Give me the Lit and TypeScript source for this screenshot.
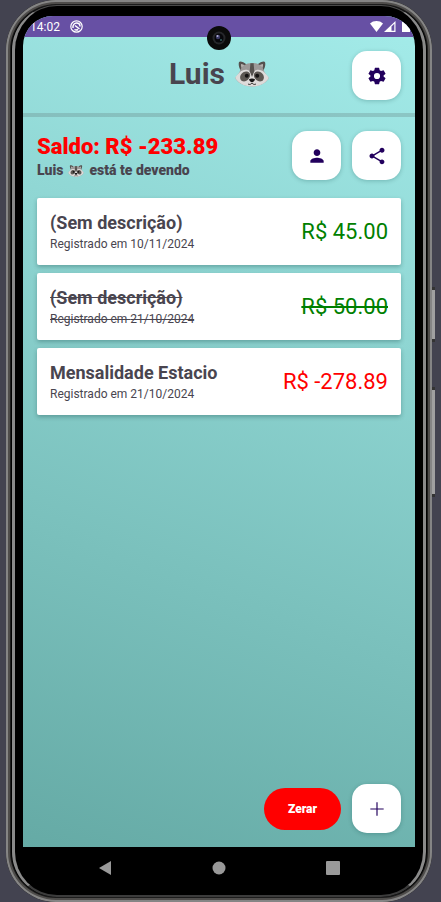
import { LitElement, html, css, svg } from "lit";
import { customElement, property } from "lit/decorators.js";
import { classMap } from "lit/directives/class-map.js";

interface Entry {
  title: string;
  date: string;
  amount: number;
  settled: boolean;
}

const ENTRIES: Entry[] = [
  { title: "(Sem descrição)", date: "10/11/2024", amount: 45, settled: false },
  { title: "(Sem descrição)", date: "21/10/2024", amount: 50, settled: true },
  { title: "Mensalidade Estacio", date: "21/10/2024", amount: -278.89, settled: false },
];

const ICONS = {
  settings: svg`<path fill-rule="evenodd" d="M9.500 2h5l.7 3.200 1.600.9 3.100-1 2.400 4.200L19.900 11.400v1.200l2.400 2.100-2.400 4.200-3.100-1-1.600.9-.7 3.200h-5l-.7-3.200-1.600-.9-3.100 1-2.400-4.200 2.400-2.100v-1.200L1.700 9.300l2.400-4.200 3.100 1 1.600-.9zM12 8.300a3.700 3.700 0 1 0 0 7.400 3.700 3.700 0 0 0 0-7.400z"/>`,
  person: svg`<path d="M12 12c2.210 0 4-1.790 4-4s-1.790-4-4-4-4 1.790-4 4 1.790 4 4 4zm0 2c-2.670 0-8 1.340-8 4v2h16v-2c0-2.660-5.330-4-8-4z"/>`,
  share: svg`<path d="M18 16.080c-.76 0-1.440.3-1.960.77L8.910 12.700c.05-.23.09-.46.09-.7s-.04-.47-.09-.7l7.050-4.110c.54.5 1.250.81 2.040.81 1.660 0 3-1.340 3-3s-1.340-3-3-3-3 1.340-3 3c0 .24.04.47.09.7L8.040 9.810C7.500 9.310 6.790 9 6 9c-1.660 0-3 1.340-3 3s1.340 3 3 3c.79 0 1.500-.31 2.040-.81l7.120 4.160c-.05.21-.08.43-.08.65 0 1.610 1.310 2.920 2.920 2.920s2.920-1.310 2.920-2.920-1.310-2.920-2.920-2.920z"/>`,
  add: svg`<path d="M11.300 4h1.400v7.300H20v1.400h-7.300V20h-1.400v-7.300H4v-1.400h7.300z"/>`,
};

const money = (value: number) => `R$ ${value.toFixed(2)}`;

@customElement("raccoon-face")
export class RaccoonFace extends LitElement {
  static styles = css`
    :host {
      display: inline-block;
      width: 34px;
      height: 26px;
    }
    svg {
      display: block;
      width: 100%;
      height: 100%;
    }
  `;
  render() {
    return html`<svg viewBox="0 0 34 26" role="img" aria-label="🦝">
      <path d="M4 1.200C4.600-.2 8.800 1 11.500 3.500L6 10C4 7 3.200 3 4 1.200z" fill="#55514f" />
      <path d="M30 1.200C29.400-.2 25.200 1 22.500 3.500L28 10C30 7 30.800 3 30 1.200z" fill="#55514f" />
      <path d="M6 3c1.600 0 3 .8 4 2L7 8C6.200 6.500 5.800 4.500 6 3z" fill="#b5b1ae" />
      <path d="M28 3c-1.600 0-3 .8-4 2l3 3c.8-1.500 1.200-3.500 1-5z" fill="#b5b1ae" />
      <path d="M17 2C11 2 6.500 5 5 10c-1 3-3.500 4.500-4.800 7C2 21 8 25.500 17 25.500S32 21 33.800 17C32.500 14.500 30 13 29 10 27.500 5 23 2 17 2z" fill="#9c9998" />
      <path d="M4.500 11.500C2.800 13.500.9 15 .3 17 2.300 21.200 8.500 25.500 17 25.500S31.700 21.200 33.700 17c-.6-2-2.500-3.500-4.200-5.500-3-3.200-8-3.500-10.500-1.200L17 14l-2-3.700c-2.500-2.300-7.500-2-10.500 1.200z" fill="#dedbda" />
      <path d="M15.400 2.200h3.200l.7 8L17 16l-2.300-5.800z" fill="#56524f" />
      <path d="M14.500 12c-2.500-2.500-6.500-1.500-8.500 1.500-1.500 2.300-1 5.500 1 6.500 3.500 1.500 6.800-1.300 7.800-4 .5-1.500.5-3-.3-4z" fill="#5d5853" />
      <path d="M19.500 12c2.500-2.500 6.500-1.500 8.500 1.500 1.500 2.300 1 5.500-1 6.500-3.500 1.500-6.800-1.300-7.800-4-.5-1.500-.5-3 .3-4z" fill="#5d5853" />
      <circle cx="11.800" cy="14.800" r="2" fill="#151313" />
      <circle cx="22.200" cy="14.800" r="2" fill="#151313" />
      <path d="M14 18.200c1.500-1 4.500-1 6 0 0 1.500-1.800 3-3 3s-3-1.500-3-3z" fill="#181616" />
      <path d="M13 23c1.500.8 3 .5 4-1 1 1.500 2.500 1.800 4 1" fill="none" stroke="#3c3836" stroke-width="1" />
    </svg>`;
  }
}

@customElement("icon-button")
export class IconButton extends LitElement {
  @property() icon: keyof typeof ICONS = "add";
  @property() label = "";
  static styles = css`
    :host {
      display: block;
    }
    button {
      display: grid;
      place-items: center;
      width: 49px;
      height: 49px;
      padding: 0;
      border: 0;
      border-radius: 15px;
      background: #fff;
      box-shadow: 0 1px 4px rgba(0, 60, 60, 0.25);
    }
    svg {
      width: 20px;
      height: 20px;
      fill: #22005d;
    }
  `;
  render() {
    return html`<button aria-label=${this.label}>
      <svg viewBox="0 0 24 24" aria-hidden="true">${ICONS[this.icon]}</svg>
    </button>`;
  }
}

@customElement("app-root")
export class AppRoot extends LitElement {
  static styles = css`
    * {
      box-sizing: border-box;
    }
    :host {
      display: block;
      background: #434350;
      color: #49454f;
      font-family: Roboto, "Liberation Sans", sans-serif;
    }
    h1,
    h2,
    h3,
    p,
    ul {
      margin: 0;
      padding: 0;
    }
    .desk {
      display: flex;
      min-height: 100vh;
      padding: 0 9px 0 6px;
    }
    .phone {
      position: relative;
      flex: 1;
      display: flex;
      flex-direction: column;
      padding: 16px 17px 0;
      border-radius: 50px;
      background: #000;
      box-shadow: inset 0 0 0 2px #858585, inset 0 0 0 4px #4f4d4b,
        inset 0 0 0 5px #1c1c1c;
    }
    .phone::before {
      content: "";
      position: absolute;
      inset: 5px 6px;
      border: solid #8a8a8a;
      border-color: #4a4a4a #8a8a8a #3c3c3c;
      border-width: 1px 3px 2px;
      border-radius: 45px;
      pointer-events: none;
    }
    .key {
      position: absolute;
      left: 100%;
      width: 3px;
      background: #a0a0a0;
      border: solid #333;
      border-width: 3px 0;
    }
    .power {
      top: 287px;
      height: 55px;
    }
    .volume {
      top: 387px;
      height: 110px;
    }
    .camera {
      position: absolute;
      top: 26px;
      left: 50%;
      width: 24px;
      height: 24px;
      margin-left: -12px;
    }
    .screen {
      flex: 1;
      display: flex;
      flex-direction: column;
      overflow: hidden;
      border-radius: 30px 30px 0 0;
      background: linear-gradient(200deg, #a4ecea, #65aaa5);
    }
    .status {
      display: flex;
      align-items: center;
      gap: 10px;
      height: 21px;
      padding: 0 0 0 7px;
      background: #6750a4;
      color: #fff;
      font-size: 12px;
    }
    .status svg {
      display: block;
    }
    .signals {
      display: flex;
      gap: 1px;
      margin-left: auto;
      padding-right: 5px;
    }
    header {
      display: grid;
      grid-template-columns: 49px 1fr 49px;
      align-items: center;
      padding: 14px 14px 13px;
      border-bottom: 4px solid rgba(100, 125, 125, 0.3);
    }
    h1 {
      grid-column: 2;
      display: flex;
      align-items: center;
      justify-content: center;
      gap: 10px;
      padding-bottom: 4px;
      font-size: 30px;
      font-weight: 700;
      line-height: 36px;
    }
    .summary {
      display: flex;
      align-items: center;
      gap: 11px;
      padding: 14px 14px 18px;
    }
    .balance {
      flex: 1;
      padding-top: 2px;
    }
    h2 {
      font-size: 22px;
      font-weight: 900;
      line-height: 28px;
      color: #f00;
      white-space: nowrap;
    }
    .who {
      display: flex;
      align-items: center;
      gap: 5px;
      font-size: 14px;
      line-height: 19px;
      font-weight: 900;
    }
    .who raccoon-face {
      width: 16px;
      height: 12px;
    }
    .list {
      flex: 1;
      display: flex;
      flex-direction: column;
      gap: 8px;
      padding: 0 14px;
      list-style: none;
    }
    .entry {
      display: flex;
      align-items: center;
      justify-content: space-between;
      padding: 12px 13px 13px;
      border-radius: 2px;
      background: #fff;
      box-shadow: 0 2px 4px rgba(0, 50, 50, 0.3);
    }
    h3 {
      font-size: 18px;
      font-weight: 700;
      line-height: 26px;
    }
    .date {
      font-size: 12px;
      line-height: 16px;
    }
    .amount {
      font-size: 22px;
      color: #008000;
    }
    .negative {
      color: #f00;
    }
    .settled {
      text-decoration: line-through;
    }
    .actions {
      display: flex;
      align-items: center;
      justify-content: flex-end;
      gap: 11px;
      padding: 14px;
    }
    .reset {
      height: 42px;
      padding: 0 24px;
      border: 0;
      border-radius: 21px;
      background: #f00;
      color: #fff;
      font: 900 12px Roboto, sans-serif;
    }
    .nav {
      display: grid;
      grid-template-columns: repeat(3, 1fr);
      height: 55px;
      padding: 0 25px 13px;
    }
    .nav button {
      display: grid;
      place-items: center;
      padding: 0;
      border: 0;
      background: none;
    }
    .nav svg {
      fill: #999;
    }
  `;

  private entry(e: Entry) {
    const settled = { settled: e.settled };
    return html`<li class="entry">
      <div class=${classMap(settled)}>
        <h3>${e.title}</h3>
        <p class="date">Registrado em ${e.date}</p>
      </div>
      <p class=${classMap({ amount: true, negative: e.amount < 0, ...settled })}>${money(e.amount)}</p>
    </li>`;
  }

  render() {
    const balance = -233.89;
    return html`<div class="desk">
      <div class="phone">
        <main class="screen">
          <div class="status">
            <span>14:02</span>
            <svg width="13" height="13" viewBox="0 0 13 13" fill="none" stroke="#fff" aria-hidden="true">
              <circle cx="6.500" cy="6.500" r="5.700" stroke-width="1.200" />
              <path d="M3 8C2.500 5 4.500 3 6.500 3s3.500 1.500 3.500 3.500M5 5.500l4.500 3.500M4.500 9.500c1 .7 2.500.6 3.500 0" stroke-width="1.500" />
            </svg>
            <div class="signals">
              <svg width="13" height="11" viewBox="0 0 13 11" fill="#fff" aria-hidden="true">
                <path d="M0 2.500C3.500-.8 9.500-.8 13 2.500L6.500 11z" />
              </svg>
              <svg width="12" height="11" viewBox="0 0 12 11" aria-hidden="true">
                <path d="M0 11L11.500 0v11z" fill="#fff" />
                <path d="M7.500 5.500L10.300 2.800v7H7.500z" fill="#6750a4" />
              </svg>
              <svg width="13" height="11" viewBox="0 0 13 11" fill="#fff" aria-hidden="true">
                <path d="M5 1h2V0h4v1h2v10H5z" />
              </svg>
            </div>
          </div>
          <header>
            <h1><span>Luis</span><raccoon-face></raccoon-face></h1>
            <icon-button icon="settings" label="Configurações"></icon-button>
          </header>
          <section class="summary">
            <div class="balance">
              <h2>Saldo: ${money(balance)}</h2>
              <p class="who"><span>Luis</span><raccoon-face></raccoon-face><span>está te devendo</span></p>
            </div>
            <icon-button icon="person" label="Pessoa"></icon-button>
            <icon-button icon="share" label="Compartilhar"></icon-button>
          </section>
          <ul class="list">${ENTRIES.map((e) => this.entry(e))}</ul>
          <div class="actions">
            <button class="reset">Zerar</button>
            <icon-button icon="add" label="Adicionar"></icon-button>
          </div>
        </main>
        <nav class="nav">
          <button aria-label="Voltar"><svg width="14" height="14" viewBox="0 0 14 14"><path d="M1 7L13 0v14z" /></svg></button>
          <button aria-label="Início"><svg width="14" height="14" viewBox="0 0 14 14"><circle cx="7" cy="7" r="6.500" /></svg></button>
          <button aria-label="Recentes"><svg width="14" height="14" viewBox="0 0 14 14"><rect width="14" height="14" rx="1" /></svg></button>
        </nav>
        <svg class="camera" viewBox="0 0 24 24" aria-hidden="true">
          <circle cx="12" cy="12" r="12" fill="#0b0b0b" />
          <circle cx="12" cy="12" r="6.500" fill="#26272a" />
          <circle cx="12" cy="12" r="4.500" fill="#07070b" />
          <circle cx="11" cy="11" r="2.200" fill="#3b3b66" />
          <circle cx="10.500" cy="10" r="1" fill="#b9b6dc" />
          <circle cx="14" cy="14" r="1" fill="#356060" />
        </svg>
        <span class="key power"></span>
        <span class="key volume"></span>
      </div>
    </div>`;
  }
}
